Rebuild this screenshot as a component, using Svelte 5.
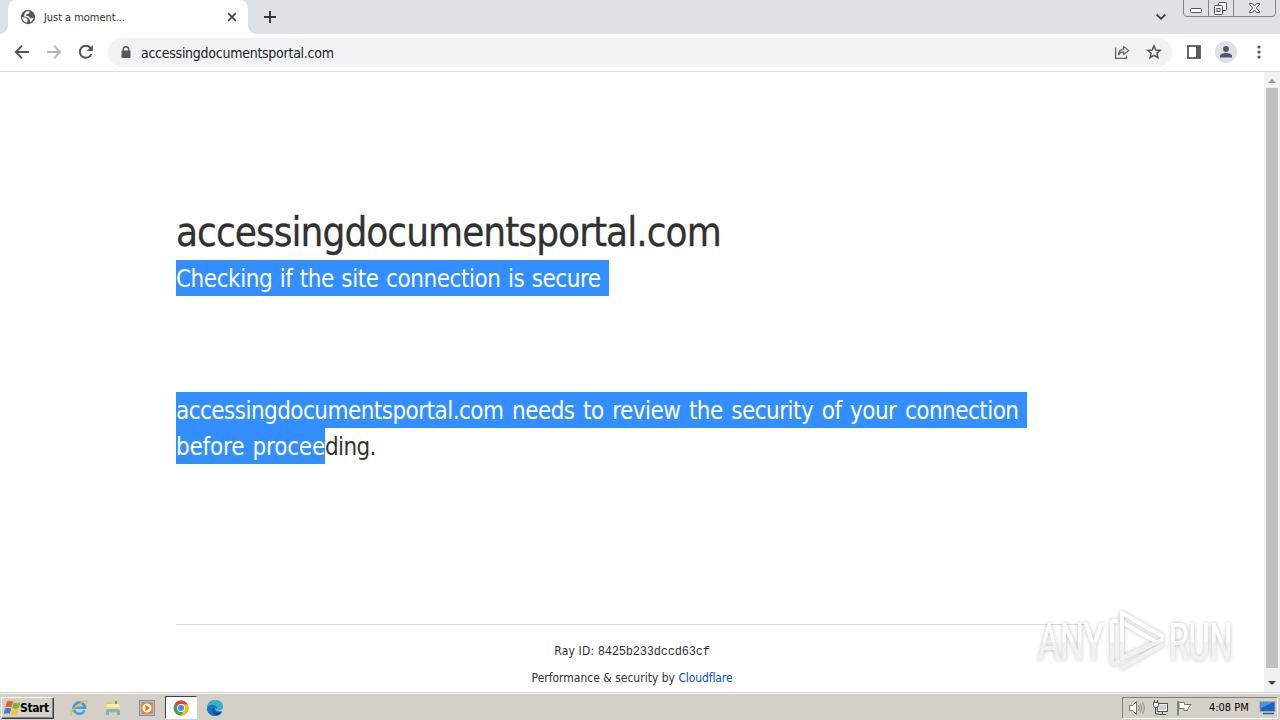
<script>
  const host = 'accessingdocumentsportal.com';
</script>

<div class="screen">
  <header class="tabs">
    <div class="tab">
      <svg class="globe" width="16" height="16" viewBox="0 0 16 16">
        <circle cx="8" cy="8" r="7.2" fill="#54575b" />
        <path d="M2 8.2 5.6 8.6 7.6 10.6 7.4 13.6C4.2 13.3 2 11 2 8.2ZM6.4 2.3 9.6 2.2 9 4.4 6.7 5.1 6 7 8.6 7.2 10.6 9.6 13.5 8.8C13 11 12 12.3 10.4 13.2L10 11 8.2 8.8 4 7.2 4.6 4.4Z" fill="#fff" />
      </svg>
      <span class="tab-title">Just a moment...</span>
      <svg class="tab-x" width="10" height="10" viewBox="0 0 10 10"><path d="M1.2 1.2 8.8 8.8M8.800 1.200 1.200 8.800" stroke="#3c4043" stroke-width="1.700" /></svg>
    </div>
    <svg class="plus" width="14" height="14" viewBox="0 0 14 14"><path d="M7 1V13M1 7H13" stroke="#33363c" stroke-width="1.900" /></svg>
    <svg class="chev" width="12" height="8" viewBox="0 0 12 8"><path d="M1.600 1.500 6 5.800 10.400 1.500" fill="none" stroke="#3c4043" stroke-width="1.800" /></svg>
    <svg class="winctl" width="94" height="18" viewBox="0 0 94 18">
      <path d="M.5 0V13Q.5 16.500 4 16.500H89Q92.500 16.500 92.500 13V0M25.500 0V16M50.500 0V16" fill="none" stroke="#80848c" />
      <g fill="#f8f9fb" stroke="#50545c">
        <rect x="7.500" y="8.500" width="11" height="4" rx="1.200" />
        <rect x="35.500" y="2.500" width="8" height="8" rx="1" />
        <rect x="31.500" y="5.500" width="8" height="9" rx="1" />
        <rect x="34" y="8.500" width="3" height="3" />
        <path d="M66.500 3.500H69.500L71.500 6 73.500 3.500H76.500V4.500L73.300 8 76.500 11.500V12.500H73.500L71.500 10 69.500 12.500H66.500V11.500L69.700 8 66.500 4.500Z" />
      </g>
    </svg>
  </header>

  <nav class="bar">
    <svg class="back" width="16" height="16" viewBox="0 0 16 16"><path d="M15 8H2M8 1.700 1.800 8 8 14.300" fill="none" stroke="#4e5155" stroke-width="1.900" /></svg>
    <svg class="fwd" width="16" height="16" viewBox="0 0 16 16"><path d="M1 8H14M8 1.700 14.200 8 8 14.300" fill="none" stroke="#b5b7ba" stroke-width="1.900" /></svg>
    <svg class="reload" width="16" height="16" viewBox="0 0 16 16"><path d="M13.400 10A6 6 0 1 1 12.400 3.900L13.500 5.200" fill="none" stroke="#4e5155" stroke-width="1.900" /><path d="M14.800 1V7H8.800Z" fill="#4e5155" /></svg>
    <div class="omni">
      <svg class="lock" width="10" height="13" viewBox="0 0 10 13"><path d="M2.300 5.500V3.400a2.700 2.700 0 0 1 5.400 0V5.500" fill="none" stroke="#55585c" stroke-width="1.400" /><rect x=".5" y="4.600" width="9" height="7.400" rx="1" fill="#55585c" /></svg>
      <span class="url">{host}</span>
      <svg class="share" width="16" height="16" viewBox="0 0 16 16"><path d="M1.600 3.500V14.300H12.500V11.500" fill="none" stroke="#5f6368" stroke-width="1.300" /><path d="M4.400 10.800C4.800 7 7 5.400 9.700 5.200V2.500L14.800 6.600 9.700 10.500V7.900C7.400 7.900 5.700 8.800 4.400 10.800Z" fill="none" stroke="#5f6368" stroke-width="1.200" stroke-linejoin="round" /></svg>
      <svg class="star" width="16" height="16" viewBox="0 0 16 16"><path d="M8 1.900 9.800 6 14.200 6.400 10.900 9.300 11.900 13.700 8 11.400 4.100 13.700 5.100 9.300 1.800 6.400 6.200 6Z" fill="none" stroke="#4f5257" stroke-width="1.500" /></svg>
    </div>
    <svg class="panel" width="14" height="14" viewBox="0 0 14 14"><rect x="1" y="1" width="12" height="12" fill="#fff" stroke="#55585d" stroke-width="1.800" /><path d="M9 1H13V13H9Z" fill="#55585d" /></svg>
    <svg class="avatar" width="22" height="22" viewBox="0 0 22 22"><circle cx="11" cy="11" r="11" fill="#dfe1e5" /><circle cx="11" cy="8" r="2.900" fill="#4b5673" /><path d="M5 16.500V15C5 12.900 8.200 12 11 12S17 12.900 17 15V16.500Z" fill="#4b5673" /></svg>
    <svg class="dots" width="4" height="14" viewBox="0 0 4 14" fill="#4e5155"><circle cx="2" cy="2" r="1.600" /><circle cx="2" cy="7" r="1.600" /><circle cx="2" cy="12" r="1.600" /></svg>
  </nav>

  <div class="view">
    <main>
      <h1><span>{host}</span></h1>
      <p class="check"><span class="sel">Checking if the site connection is secure&nbsp;</span></p>
      <p class="review"><span class="sel l1">{host} needs to review the security of your connection&nbsp;</span><span class="sel l2">before procee</span><span class="l3">ding.</span></p>
      <footer>
        <div class="ray"><span class="rl">Ray ID:</span> <code>8425b233dccd63cf</code></div>
        <div class="perf"><span>Performance &amp; security by <a>Cloudflare</a></span></div>
      </footer>
    </main>
    <aside class="scroll">
      <svg width="16" height="16" viewBox="0 0 16 16"><path d="M4 11H12L8 7Z" fill="#9b9b9b" /></svg>
      <div class="thumb"></div>
      <svg width="16" height="16" viewBox="0 0 16 16"><path d="M4 6H12L8 10Z" fill="#404040" /></svg>
    </aside>
    <svg class="mark" width="210" height="80" viewBox="0 0 210 80">
      <defs>
        <filter id="glow" x="-10%" y="-20%" width="120%" height="140%"><feDropShadow dx="0" dy="0" stdDeviation="2" flood-color="#000" flood-opacity=".32" /></filter>
        <linearGradient id="fade" gradientUnits="userSpaceOnUse" x1="0" y1="0" x2="0" y2="76"><stop offset=".49" stop-color="#fff" /><stop offset=".51" stop-color="#f0f0f0" /></linearGradient>
        <linearGradient id="fade-text" gradientUnits="userSpaceOnUse" x1="0" y1="-56" x2="0" y2="20"><stop offset=".49" stop-color="#fff" /><stop offset=".51" stop-color="#f0f0f0" /></linearGradient>
      </defs>
      <g filter="url(#glow)">
        <text transform="translate(8 56) scale(.66 1)" fill="url(#fade-text)">ANY</text>
        <text transform="translate(139 56) scale(.63 1)" fill="url(#fade-text)">RUN</text>
        <path d="M86 17H84Q82 17 82 20V57Q82 60 85 60L88 58M92 9V54M92 9 132 32M92 18 126 38M92 54 132 36M92 64 132 41" fill="none" stroke="url(#fade)" stroke-width="3.600" stroke-linecap="round" stroke-linejoin="round" />
      </g>
    </svg>
  </div>

  <footer class="task">
    <div class="start">
      <svg width="17" height="16" viewBox="0 0 17 16"><path d="M3 1.500Q6 -.2 9 1.700L7.500 7.500Q5 6 1.200 7.500Z" fill="#e8622c" /><path d="M9.800 2.300Q12.500 4 16.200 2.200L14.600 8Q11.500 9.500 8.300 8Z" fill="#7db72f" /><path d="M1 8.500Q4.500 7 7.200 8.500L5.700 14Q3 12.500 -.3 14Z" fill="#3b83d2" /><path d="M8 9Q11 10.500 14.300 9L12.700 14.700Q9.500 16 6.500 14.600Z" fill="#f8c52b" /></svg>
      <b>Start</b>
    </div>
    <svg class="app" width="18" height="18" viewBox="0 0 18 18"><path d="M14.500 11.500A5.700 5.700 0 1 1 15 8.800H5" fill="none" stroke="#3f9fdf" stroke-width="2.600" /><path d="M1.500 16.500C-1 13 10 3 15.500 1.800 18 1.500 17 4 16 5.500" fill="none" stroke="#e9b93d" stroke-width="1.200" /></svg>
    <svg class="app" width="18" height="18" viewBox="0 0 18 18"><path d="M2 3H7L8 5H14V14H2Z" fill="#e9c45b" /><path d="M3 5H15L16 8H2Z" fill="#fbeba6" /><path d="M2 8H16V11H2Z" fill="#f2d979" /><path d="M2 16V12Q2 10 4 10H14Q16 10 16 12V16H13V13H5V16Z" fill="#71b7d8" /><path d="M11 2H13V5H11Z" fill="#68a94b" /></svg>
    <svg class="app" width="18" height="18" viewBox="0 0 18 18"><rect x="1.500" y="1.500" width="15" height="15" fill="#a8c7e4" stroke="#6e95bd" /><rect x="3" y="3" width="12" height="12" rx="1" fill="#f28318" /><circle cx="9" cy="9" r="4.600" fill="#fff" /><path d="M7.300 5.800V12.200L12 9Z" fill="#ed7410" /></svg>
    <div class="running">
      <svg width="16" height="16" viewBox="0 0 16 16"><circle cx="8" cy="8" r="7.500" fill="#34a853" /><path d="M8 8 1.500 4.200A7.500 7.500 0 0 1 14.500 4.200H8Z" fill="#ea4335" /><path d="M8 4.200H14.500A7.500 7.500 0 0 1 7.700 15.500L11.400 9.800Z" fill="#fbbc05" /><circle cx="8" cy="8" r="3.900" fill="#fff" /><circle cx="8" cy="8" r="3" fill="#4285f4" /></svg>
    </div>
    <svg class="app edge" width="18" height="18" viewBox="0 0 18 18"><circle cx="9" cy="9" r="8" fill="#1179c9" /><path d="M1.200 8C2.500-1.500 16.500-1.200 17 8 17 11.500 12.500 12.300 10.500 10.800 13 7 7 3.500 1.200 8Z" fill="#35b5c4" /><path d="M1.200 8C6 4 10.500 6 10 9 7 8.500 6 14 12 15.800 5 19 .3 13.500 1.200 8Z" fill="#1676c4" /><path d="M8.500 9C7 12.500 11 14.700 15.800 13 14 16 11 16.800 9 15.700 5 14 5.500 9 8.500 9Z" fill="#104c91" /><path d="M9.200 8.500Q9 11.800 13 12.300H18V9L16.900 8.500C16.700 11.500 12.500 12.300 10.500 10.800Z" fill="#d4d0c8" /></svg>
    <div class="tray">
      <svg width="18" height="16" viewBox="0 0 18 16"><path d="M1.500 5.500H4.500L8.500 1.500V14.500L4.500 10.500H1.500Z" fill="#fff" stroke="#77746e" /><path d="M10.500 5Q12 8 10.500 11M12.500 3.500Q15 8 12.500 12.500M14.500 2Q18 8 14.500 14" fill="none" stroke="#88857f" /></svg>
      <svg class="net" width="17" height="16" viewBox="0 0 17 16"><rect x="5.500" y="3.500" width="10" height="8" fill="#d2d0ca" stroke="#55534f" /><rect x="6.500" y="4.500" width="8" height="6" fill="none" stroke="#f4f3f0" /><path d="M7 14.500H14M10.500 11.500V14.500M3.500 6V14H7" fill="none" stroke="#55534f" /><path d="M1.500 2.500H6.500V5.500L5.500 7.500H2.500L1.500 5.500ZM2.500 0V2.500M5.500 0V2.500" fill="#fff" stroke="#55534f" /></svg>
      <svg class="flag" width="16" height="16" viewBox="0 0 16 16"><path d="M2 1V15.500" stroke="#6d6a65" stroke-width="1.500" /><path d="M3 2.500H8.500V4.500H15L12.500 7.500 11.500 10.500H8V8.500H3Z" fill="#fff" stroke="#77746e" /></svg>
      <span class="time">4:08 PM</span>
      <svg class="desk" width="17" height="15" viewBox="0 0 17 15"><path d="M1 1.500H16V11.500H1Z" fill="#1d62bb" stroke="#9aa9bd" /><path d="M2 2H15L2 8Z" fill="#4c94e0" /><path d="M4 13.500H15" stroke="#355885" stroke-width="1.500" /></svg>
    </div>
  </footer>
</div>

<style>
  :global(body) { background: #fff; overflow: hidden; }
  .screen { width: 1280px; height: 720px; display: flex; flex-direction: column; overflow: hidden; font-family: "DejaVu Sans Condensed", "DejaVu Sans", sans-serif; font-stretch: condensed; color: #313131; }
  svg { display: block; flex: none; }
  span, b, code { white-space: nowrap; }
  .tabs { height: 34px; flex: none; background: #dee1e6; display: flex; align-items: flex-start; }
  .tab { position: relative; width: 240px; height: 34px; margin-left: 8px; box-sizing: border-box; padding: 0 12px; background: #fff; border-radius: 8px 8px 0 0; display: flex; align-items: center; }
  .tab::before, .tab::after { content: ""; position: absolute; bottom: 0; width: 8px; height: 8px; }
  .tab::before { left: -8px; background: radial-gradient(circle at 0 0, transparent 7.500px, #fff 8px); }
  .tab::after { right: -8px; background: radial-gradient(circle at 100% 0, transparent 7.500px, #fff 8px); }
  .tab-title { margin-left: 8px; font-size: 11px; letter-spacing: -0.050px; flex: 1; }
  .tab-x { margin-right: -1px; }
  .plus { margin: 10px 0 0 15px; }
  .chev { margin: 13px 16px 0 auto; }
  .winctl { margin-right: 3px; }
  .bar { height: 37px; flex: none; border-bottom: 1px solid #d8dadd; display: flex; align-items: center; background: #fff; }
  .bar > svg { margin-bottom: 1px; }
  .back { margin-left: 14px; }
  .fwd, .reload { margin-left: 16px; }
  .omni { width: 1064px; height: 29px; margin-left: 14px; border-radius: 15px; background: #f0f3f5; display: flex; align-items: center; box-sizing: border-box; padding: 0 10px 1px 13px; }
  .url { margin-left: 10px; padding-top: 1px; flex: 1; font-size: 14px; letter-spacing: -0.260px; color: #202124; }
  .star { margin-left: 16px; }
  .panel { margin-left: 15px; }
  .avatar { margin-left: 14px; }
  .dots { margin-left: 20px; }
  .view { position: relative; height: 620px; flex: none; display: flex; justify-content: space-between; }
  main { width: 912px; margin-left: 176px; padding-top: 136px; box-sizing: border-box; }
  h1, p { margin: 0; font-weight: 400; }
  h1 { font-size: 40px; line-height: 48px; height: 52px; letter-spacing: -0.950px; -webkit-text-stroke: 0.300px #313131; }
  p { font-size: 24px; line-height: 38px; height: 36px; }
  .sel { height: 36px; background: #338fff; color: #fff; }
  .check .sel { display: block; width: 433px; letter-spacing: -0.460px; word-spacing: 1.100px; }
  .review { margin-top: 96px; height: 72px; display: grid; grid-template: 36px 36px / 149px 1fr; }
  .l1 { grid-column: 1 / 3; width: 851px; letter-spacing: -0.550px; word-spacing: 2.300px; }
  .l2 { letter-spacing: -0.200px; word-spacing: 1.600px; }
  .l3 { letter-spacing: -0.650px; }
  main footer { margin-top: 160px; border-top: 1px solid #d9d9d9; font-size: 12px; line-height: 18px; text-align: center; padding-top: 17px; }
  code { font-family: "Liberation Mono", monospace; font-size: 12px; letter-spacing: -0.200px; }
  .rl { letter-spacing: 0.150px; }
  .perf { margin-top: 8px; }
  a { color: #0051c3; letter-spacing: -0.100px; }
  .scroll { width: 16px; background: #f1f1f1; display: flex; flex-direction: column; }
  .thumb { width: 12px; height: 580px; margin: 0 auto 7px; background: #c1c1c1; }
  .mark { position: absolute; left: 1030px; top: 532px; opacity: .9; }
  .mark text { font-family: Roboto, sans-serif; font-size: 51px; font-stretch: normal; }
  .task { height: 28px; flex: none; box-sizing: border-box; background: #d4d0c8; border-top: 1px solid #d4d0c8; box-shadow: inset 0 1px #fff; display: flex; align-items: center; padding: 2px 2px 0 1px; color: #000; }
  .start { width: 53px; height: 22px; box-sizing: border-box; border: 1px solid; border-color: #fff #404040 #404040 #fff; box-shadow: inset -1px -1px #808080; display: flex; align-items: center; padding-left: 2px; }
  .start b { font-size: 12px; letter-spacing: -0.400px; margin-left: -1px; }
  .app { margin-left: 16px; }
  .running { width: 32px; height: 23px; margin-left: 9px; box-sizing: border-box; border: 1px solid; border-color: #404040 #fff #fff #404040; background: #fff; display: flex; align-items: center; justify-content: center; }
  .edge { margin-left: 9px; }
  .tray { width: 156px; height: 22px; margin-left: auto; box-sizing: border-box; border: 1px solid; border-color: #808080 #fff #fff #808080; display: flex; align-items: center; padding-left: 5px; }
  .net { margin-left: 6px; }
  .flag { margin-left: 7px; }
  .time { margin-left: 17px; font-size: 11px; letter-spacing: -0.030px; width: 42px; }
  .desk { margin-left: 8px; }
</style>
